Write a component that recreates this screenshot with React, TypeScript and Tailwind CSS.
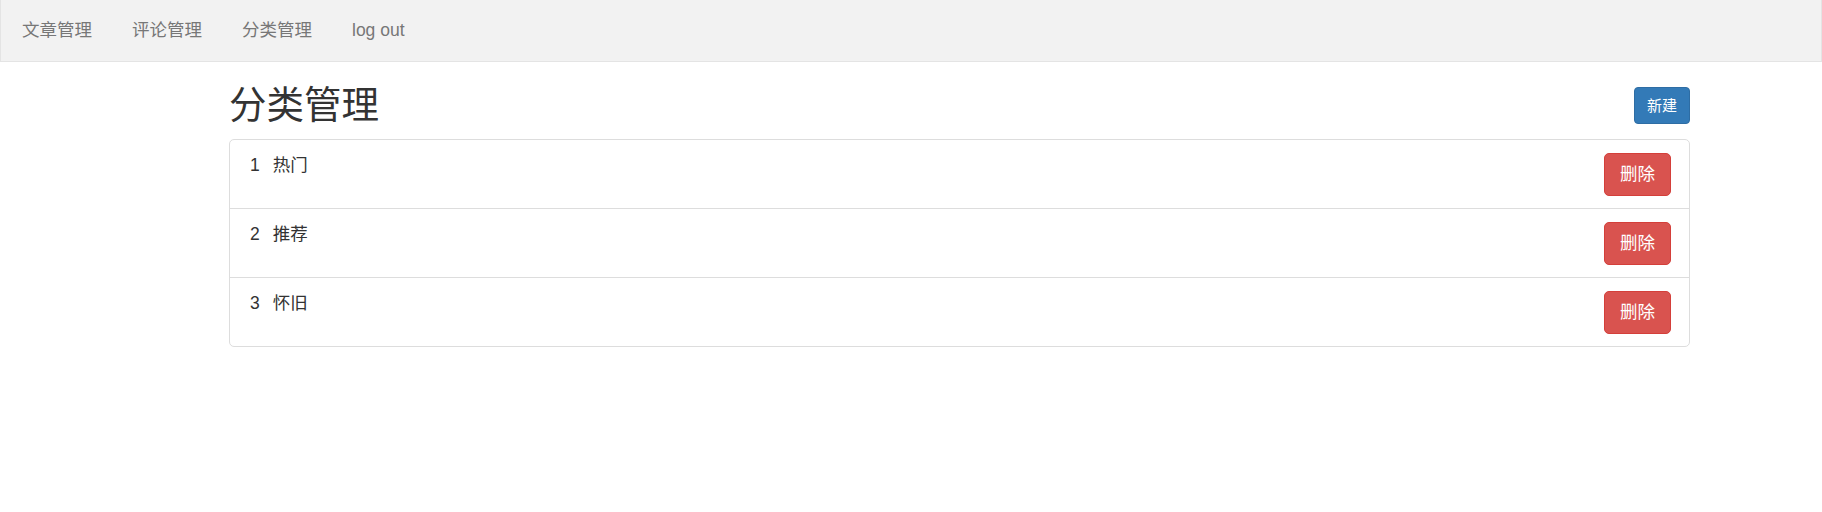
const font = { fontFamily: '"Liberation Sans", "Noto Sans CJK SC", sans-serif' };

const categories = [
  { id: 1, name: '热门' },
  { id: 2, name: '推荐' },
  { id: 3, name: '怀旧' },
];

export default function App() {
  return (
    <div className="min-h-[512px] bg-white text-[#333]" style={font}>
      {/* Navbar */}
      <nav className="h-[62px] bg-[#f2f2f2] border-x border-b border-[#e4e4e4] flex items-center px-[1px]">
        {['文章管理', '评论管理', '分类管理', 'log out'].map((item) => (
          <a key={item} href="#" className="px-[20px] text-[17.5px] leading-[25px] text-[#777] hover:text-[#333]">
            {item}
          </a>
        ))}
      </nav>

      {/* Content */}
      <div className="ml-[229px] w-[1461px]">
        <div className="mt-[23px] mb-[13px] h-[41px] flex items-center justify-between">
          <h2 className="text-[37.5px] leading-[41px] font-normal text-[#333]">分类管理</h2>
          <button className="h-[37px] px-[12px] bg-[#337ab7] border border-[#2e6da4] rounded-[4px] text-white text-[15px] leading-[20px]">
            新建
          </button>
        </div>

        <ul className="border border-[#ddd] rounded-[5px]">
          {categories.map((c, i) => (
            <li
              key={c.id}
              className={
                'flex justify-between items-start pl-[20px] pr-[18px] pt-[13px] pb-[12px] ' +
                (i > 0 ? 'border-t border-[#ddd]' : '')
              }
            >
              <div className="flex gap-[13px] text-[17.5px] leading-[25px]">
                <span>{c.id}</span>
                <span>{c.name}</span>
              </div>
              <button className="h-[43px] w-[67px] bg-[#d9534f] border border-[#d43f3a] rounded-[5px] text-white text-[17.5px] leading-[25px]">
                删除
              </button>
            </li>
          ))}
        </ul>
      </div>
    </div>
  );
}
